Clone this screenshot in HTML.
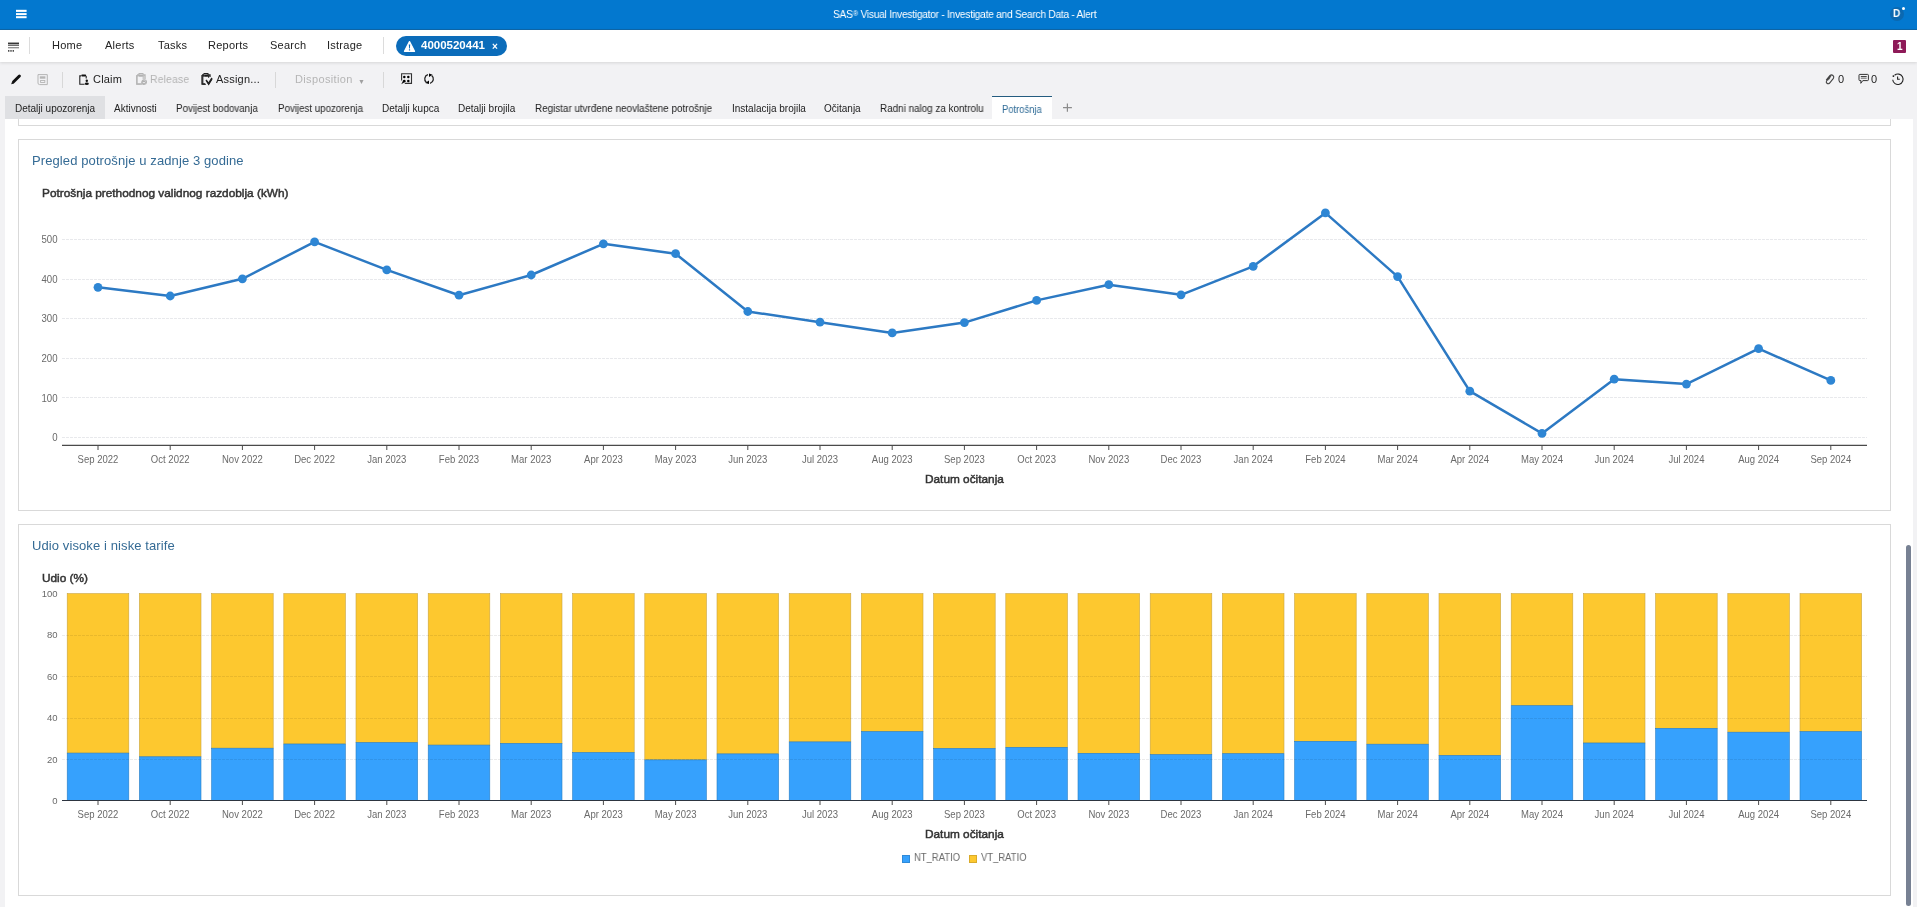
<!DOCTYPE html>
<html><head><meta charset="utf-8">
<style>
*{box-sizing:border-box;margin:0;padding:0}
html,body{width:1917px;height:907px;overflow:hidden;background:#f2f2f4;font-family:"Liberation Sans", sans-serif;color:#1f1f1f}
.abs{position:absolute;white-space:nowrap;will-change:transform}
#top{position:absolute;left:0;top:0;width:1917px;height:30px;background:#0378cf;border-bottom:1px solid #0f66a8}
#nav{position:absolute;left:0;top:30px;width:1917px;height:32px;background:#fff;box-shadow:0 1px 3px rgba(0,0,0,0.12)}
.nv{font-size:11px;color:#222;top:39px;letter-spacing:0.25px}
.tb{font-size:11px;color:#222;top:73px;letter-spacing:0.2px}
.tab{font-size:10px;color:#222;top:103px}
#content{position:absolute;left:5px;top:119px;width:1908px;height:788px;background:#fff}
.panel{position:absolute;border:1px solid #d9d9d9;background:#fff}
.ptitle{font-size:13px;color:#356b95;letter-spacing:0.1px}
svg text{font-family:"Liberation Sans", sans-serif}
.yl{font-size:11px;fill:#6a6a6a}
.yl2{font-size:9.5px;fill:#6a6a6a}
.xl{font-size:10.6px;fill:#6a6a6a}
</style></head><body>
<div id="top"></div>
<div class="abs" style="left:833px;top:8px;font-size:11px;color:#fff;letter-spacing:-0.3px;transform:scaleX(0.932);transform-origin:0 0">SAS<span style="font-size:8px;position:relative;top:-2px">®</span> Visual Investigator - Investigate and Search Data - Alert</div>
<div id="nav"></div>
<div class="abs nv" style="left:52px">Home</div>
<div class="abs nv" style="left:105px">Alerts</div>
<div class="abs nv" style="left:158px">Tasks</div>
<div class="abs nv" style="left:208px">Reports</div>
<div class="abs nv" style="left:270px">Search</div>
<div class="abs nv" style="left:327px">Istrage</div>
<!-- top bar icons -->
<svg class="abs" style="left:16px;top:9px" width="11" height="10" viewBox="0 0 11 10"><rect x="0" y="0.8" width="10.6" height="2.1" fill="#fff"/><rect x="0" y="4.1" width="10.6" height="2" fill="#fff"/><rect x="0" y="7.2" width="10.6" height="2" fill="#fff"/></svg>
<div class="abs" style="left:1890px;top:7px;width:14px;height:14px;border-radius:50%;background:#0b68b0"></div>
<div class="abs" style="left:1893px;top:7px;font-size:10.5px;font-weight:bold;color:#fff;transform:scaleX(0.95);transform-origin:0 0">D</div>
<div class="abs" style="left:1902px;top:7px;width:3.4px;height:3.4px;border-radius:50%;background:#fff"></div>
<!-- nav -->
<svg class="abs" style="left:7px;top:42px" width="13" height="11" viewBox="0 0 13 11"><rect x="1" y="0.6" width="11" height="1.3" fill="#222"/><rect x="1" y="2.6" width="11" height="1.1" fill="#333"/><rect x="1" y="5.2" width="11" height="1.1" fill="#777"/><rect x="1" y="8.2" width="1.4" height="1.4" fill="#222"/><rect x="3.3" y="8.2" width="1.4" height="1.4" fill="#222"/><rect x="5.6" y="8.2" width="1.4" height="1.4" fill="#222"/></svg>
<div class="abs" style="left:29px;top:37px;width:1px;height:17px;background:#dcdcdc"></div>
<div class="abs" style="left:383px;top:37px;width:1px;height:17px;background:#dcdcdc"></div>
<div class="abs" style="left:396px;top:36px;width:111px;height:20px;border-radius:10px;background:#0b6cba"></div>
<svg class="abs" style="left:402px;top:39px" width="15" height="15" viewBox="402 39 15 15"><path d="M409.5 41.6 L414.5 51.3 L404.5 51.3 Z" fill="#fff" stroke="#fff" stroke-width="1.3" stroke-linejoin="round"/><path d="M408.8 44.6 H410.2 L409.9 48.6 H409.1 Z" fill="#0b6cba"/><rect x="408.9" y="49.3" width="1.2" height="1.2" fill="#0b6cba"/></svg>
<div class="abs" style="left:421px;top:39px;font-size:11.5px;font-weight:bold;color:#fff">4000520441</div>
<div class="abs" style="left:492px;top:41px;font-size:10px;font-weight:bold;color:#fff">×</div>
<div class="abs" style="left:1893px;top:40px;width:13px;height:12.5px;border-radius:1px;background:#8e1a58"></div>
<div class="abs" style="left:1896.5px;top:41px;font-size:10px;font-weight:bold;color:#fff">1</div>
<!-- toolbar -->
<svg class="abs" style="left:0;top:66px" width="230" height="26" viewBox="0 66 230 26">
<path d="M13.6 81.8 L19.4 76" stroke="#111" stroke-width="3" stroke-linecap="round"/>
<path d="M11.2 84.3 L12.1 81.5 L14 83.4 Z" fill="#111"/>
<path d="M38 74.6 H47.3 V84.6 H39.6 Q38 84.6 38 83 Z" fill="none" stroke="#b5b5b5" stroke-width="1"/>
<rect x="39.8" y="76.3" width="5.6" height="2.4" fill="#b5b5b5"/>
<rect x="40.6" y="80.5" width="4.2" height="2" fill="none" stroke="#b5b5b5" stroke-width="0.9"/>
<path d="M81 75.9 H79.8 V84.3 H84.6 M86.2 75.9 V78.6" fill="none" stroke="#222" stroke-width="1.1"/>
<rect x="81.2" y="74.5" width="5" height="2.1" rx="1" fill="#111"/>
<circle cx="86.8" cy="80.7" r="1.2" fill="#111"/>
<ellipse cx="86.8" cy="83.7" rx="2" ry="1.2" fill="#111"/>
<path d="M138.3 75.9 H136.6 V84.3 H140.5 M143.2 75.9 V79.2" fill="none" stroke="#bcbcbc" stroke-width="1.1"/>
<rect x="138.5" y="74.5" width="4.5" height="2" rx="0.8" fill="#b0b0b0"/>
<circle cx="143.6" cy="82.6" r="2.3" fill="#b0b0b0"/>
<rect x="142.2" y="82.2" width="2.8" height="0.9" fill="#f2f2f4"/>
<path d="M204.3 75.9 H202.8 V84.3 H206 M208.6 75.9 V77.8" fill="none" stroke="#222" stroke-width="1.1"/>
<rect x="204.4" y="74.4" width="4" height="2.1" rx="1" fill="#111"/>
<path d="M206.8 81.2 L208.7 84.3 L212 79" fill="none" stroke="#111" stroke-width="1.3"/>
</svg>
<div class="abs" style="left:62px;top:72px;width:1px;height:16px;background:#d8d8d8"></div>
<div class="abs tb" style="left:93px">Claim</div>
<svg class="abs" style="left:136px;top:73px" width="11" height="12" viewBox="0 0 11 12"><path d="M1 2 H3 M7 2 H9 V6 M1 2 V11 H6" fill="none" stroke="#b5b5b5" stroke-width="1.3"/><rect x="3" y="0.5" width="4" height="2.5" fill="none" stroke="#b5b5b5" stroke-width="1"/><circle cx="8.3" cy="9" r="2.2" fill="none" stroke="#b5b5b5" stroke-width="1.1"/></svg>
<div class="abs tb" style="left:150px;color:#b3b3b3;transform:scaleX(0.94);transform-origin:0 0">Release</div>
<svg class="abs" style="left:201px;top:73px" width="12" height="12" viewBox="0 0 12 12"><path d="M1 2 H3 M7 2 H9 V4 M1 2 V11 H4" fill="none" stroke="#222" stroke-width="1.3"/><rect x="3" y="0.5" width="4" height="2.5" fill="none" stroke="#222" stroke-width="1"/><path d="M5 7 L7.5 10.5 L11 5" fill="none" stroke="#222" stroke-width="1.4"/></svg>
<div class="abs tb" style="left:216px">Assign...</div>
<div class="abs" style="left:275px;top:72px;width:1px;height:16px;background:#d8d8d8"></div>
<div class="abs tb" style="left:295px;color:#b5b5b5;letter-spacing:0.36px">Disposition</div>
<div class="abs" style="left:358px;top:77.5px;font-size:7px;color:#a0a0a0">▼</div>
<div class="abs" style="left:383px;top:72px;width:1px;height:16px;background:#d8d8d8"></div>
<svg class="abs" style="left:398px;top:71px" width="16" height="16" viewBox="398 71 16 16"><path d="M401.6 80.5 V73.8 H411.5 V83.4 H404.8" fill="none" stroke="#333" stroke-width="1.1"/><path d="M403.2 80.2 L405.8 81.6 L401.3 84.2 Z" fill="#111"/><circle cx="404.3" cy="77" r="1.25" fill="#000"/><circle cx="408.3" cy="77" r="1.25" fill="#000"/><circle cx="404.3" cy="81" r="1.25" fill="#000"/><circle cx="408.3" cy="81" r="1.25" fill="#000"/></svg>
<svg class="abs" style="left:421px;top:71px" width="16" height="16" viewBox="421 71 16 16"><path d="M428 74.7 A4.4 4.4 0 0 0 426.4 82.4" fill="none" stroke="#222" stroke-width="1.3"/><path d="M431.7 75.6 A4.4 4.4 0 0 1 430.1 83.3" fill="none" stroke="#222" stroke-width="1.3"/><path d="M429 73.6 L429 77.1 L432.6 74.7 Z" fill="#000"/><path d="M429 80.5 L429 84 L425.3 82.9 Z" fill="#000"/></svg>
<!-- right toolbar -->
<svg class="abs" style="left:1815px;top:66px" width="100" height="26" viewBox="1815 66 100 26">
<path d="M1831.2 75.4 L1826.6 80.8 A1.9 1.9 0 0 0 1829.4 83.3 L1833.4 78.4 A2.3 2.3 0 0 0 1830 75.4 L1826.2 80" fill="none" stroke="#444" stroke-width="1.1"/>
<path d="M1830.3 77.6 L1828 80.4" stroke="#555" stroke-width="0.9"/>
<path d="M1859 75.2 Q1859 74.4 1859.8 74.4 H1867.6 Q1868.4 74.4 1868.4 75.2 V79.8 Q1868.4 80.6 1867.6 80.6 H1862.8 L1860.8 83.3 L1861 80.6 H1859.8 Q1859 80.6 1859 79.8 Z" fill="none" stroke="#333" stroke-width="1"/>
<rect x="1860.8" y="76" width="5.9" height="0.9" fill="#333"/>
<rect x="1860.8" y="77.7" width="5.9" height="0.9" fill="#555"/>
<path d="M1894.6 75.2 A5.2 5.2 0 1 1 1892.7 79.8" fill="none" stroke="#222" stroke-width="1.1"/>
<circle cx="1893.4" cy="76.1" r="0.9" fill="#111"/>
<path d="M1897.6 76.4 V79.3 H1899.8" fill="none" stroke="#222" stroke-width="1.1"/>
</svg>
<div class="abs tb" style="left:1838px">0</div>
<div class="abs tb" style="left:1871px">0</div>
<!-- tabs -->
<div class="abs" style="left:5px;top:96px;width:100px;height:23px;background:#dfe0e3"></div>
<div class="abs" style="left:992px;top:96px;width:60px;height:23px;background:#fff;border-top:1.5px solid #245c80"></div>
<div class="abs tab" style="left:15px">Detalji upozorenja</div>
<div class="abs tab" style="left:114px">Aktivnosti</div>
<div class="abs tab" style="left:176px;transform:scaleX(0.973);transform-origin:0 0">Povijest bodovanja</div>
<div class="abs tab" style="left:278px;transform:scaleX(0.972);transform-origin:0 0">Povijest upozorenja</div>
<div class="abs tab" style="left:382px">Detalji kupca</div>
<div class="abs tab" style="left:458px">Detalji brojila</div>
<div class="abs tab" style="left:535px;transform:scaleX(0.986);transform-origin:0 0">Registar utvrđene neovlaštene potrošnje</div>
<div class="abs tab" style="left:732px">Instalacija brojila</div>
<div class="abs tab" style="left:824px">Očitanja</div>
<div class="abs tab" style="left:880px;transform:scaleX(0.986);transform-origin:0 0">Radni nalog za kontrolu</div>
<div class="abs tab" style="left:1002px;top:104px;color:#2d6a96;transform:scaleX(0.938);transform-origin:0 0">Potrošnja</div>
<svg class="abs" style="left:1060px;top:100px" width="16" height="16" viewBox="1060 100 16 16"><path d="M1063 107.6 H1071.9 M1067.4 103.6 V111.7" stroke="#8c8c8c" stroke-width="1.2"/></svg>


<div id="content"></div>
<div class="panel" style="left:18px;top:119px;width:1873px;height:7px;border-top:none"></div>
<div class="panel" style="left:18px;top:139px;width:1873px;height:372px"></div>
<div class="panel" style="left:18px;top:524px;width:1873px;height:372px"></div>

<div class="abs ptitle" style="left:32px;top:153px">Pregled potrošnje u zadnje 3 godine</div>
<div class="abs" style="left:42px;top:187px;font-size:11px;color:#333;-webkit-text-stroke:0.45px #333;transform:scaleX(1.075);transform-origin:0 0">Potrošnja prethodnog validnog razdoblja (kWh)</div>
<div class="abs" style="left:925px;top:473px;font-size:11px;color:#333;-webkit-text-stroke:0.45px #333;transform:scaleX(1.075);transform-origin:0 0">Datum očitanja</div>
<div class="abs ptitle" style="left:32px;top:538px">Udio visoke i niske tarife</div>
<div class="abs" style="left:42px;top:572px;font-size:11px;color:#333;-webkit-text-stroke:0.45px #333;transform:scaleX(1.075);transform-origin:0 0">Udio (%)</div>
<div class="abs" style="left:925px;top:828px;font-size:11px;color:#333;-webkit-text-stroke:0.45px #333;transform:scaleX(1.075);transform-origin:0 0">Datum očitanja</div>


<div class="abs" style="left:902px;top:855px;width:8px;height:8px;background:#36a1fd;border:0.5px solid #2f8ad8"></div>
<div class="abs" style="left:914px;top:851px;font-size:10.5px;color:#6a6a6a;transform:scaleX(0.9);transform-origin:0 0">NT_RATIO</div>
<div class="abs" style="left:969px;top:855px;width:8px;height:8px;background:#fdc82f;border:0.5px solid #d9ab2b"></div>
<div class="abs" style="left:981px;top:851px;font-size:10.5px;color:#6a6a6a;transform:scaleX(0.9);transform-origin:0 0">VT_RATIO</div>
<div class="abs" style="left:1906px;top:545px;width:5px;height:361px;border-radius:3px;background:#778193"></div>
<svg class="abs" style="left:0;top:0" width="1917" height="907" viewBox="0 0 1917 907">
<line x1="62" y1="437.5" x2="1867" y2="437.5" stroke="#e8e9ec" stroke-width="1" stroke-dasharray="3,1"/>
<text transform="translate(57.5,441.2) scale(0.875,1)" text-anchor="end" class="yl">0</text>
<line x1="62" y1="397.5" x2="1867" y2="397.5" stroke="#e8e9ec" stroke-width="1" stroke-dasharray="3,1"/>
<text transform="translate(57.5,401.6) scale(0.875,1)" text-anchor="end" class="yl">100</text>
<line x1="62" y1="358.5" x2="1867" y2="358.5" stroke="#e8e9ec" stroke-width="1" stroke-dasharray="3,1"/>
<text transform="translate(57.5,362.0) scale(0.875,1)" text-anchor="end" class="yl">200</text>
<line x1="62" y1="318.5" x2="1867" y2="318.5" stroke="#e8e9ec" stroke-width="1" stroke-dasharray="3,1"/>
<text transform="translate(57.5,322.4) scale(0.875,1)" text-anchor="end" class="yl">300</text>
<line x1="62" y1="279.5" x2="1867" y2="279.5" stroke="#e8e9ec" stroke-width="1" stroke-dasharray="3,1"/>
<text transform="translate(57.5,282.8) scale(0.875,1)" text-anchor="end" class="yl">400</text>
<line x1="62" y1="239.5" x2="1867" y2="239.5" stroke="#e8e9ec" stroke-width="1" stroke-dasharray="3,1"/>
<text transform="translate(57.5,243.2) scale(0.875,1)" text-anchor="end" class="yl">500</text>
<line x1="62" y1="445.3" x2="1867" y2="445.3" stroke="#4a4a4a" stroke-width="1.2"/>
<line x1="98.0" y1="445" x2="98.0" y2="450" stroke="#4a4a4a" stroke-width="1"/>
<text transform="translate(98.0,462.8) scale(0.9,1)" text-anchor="middle" class="xl">Sep 2022</text>
<line x1="170.2" y1="445" x2="170.2" y2="450" stroke="#4a4a4a" stroke-width="1"/>
<text transform="translate(170.2,462.8) scale(0.9,1)" text-anchor="middle" class="xl">Oct 2022</text>
<line x1="242.4" y1="445" x2="242.4" y2="450" stroke="#4a4a4a" stroke-width="1"/>
<text transform="translate(242.4,462.8) scale(0.9,1)" text-anchor="middle" class="xl">Nov 2022</text>
<line x1="314.6" y1="445" x2="314.6" y2="450" stroke="#4a4a4a" stroke-width="1"/>
<text transform="translate(314.6,462.8) scale(0.9,1)" text-anchor="middle" class="xl">Dec 2022</text>
<line x1="386.8" y1="445" x2="386.8" y2="450" stroke="#4a4a4a" stroke-width="1"/>
<text transform="translate(386.8,462.8) scale(0.9,1)" text-anchor="middle" class="xl">Jan 2023</text>
<line x1="459.0" y1="445" x2="459.0" y2="450" stroke="#4a4a4a" stroke-width="1"/>
<text transform="translate(459.0,462.8) scale(0.9,1)" text-anchor="middle" class="xl">Feb 2023</text>
<line x1="531.2" y1="445" x2="531.2" y2="450" stroke="#4a4a4a" stroke-width="1"/>
<text transform="translate(531.2,462.8) scale(0.9,1)" text-anchor="middle" class="xl">Mar 2023</text>
<line x1="603.4" y1="445" x2="603.4" y2="450" stroke="#4a4a4a" stroke-width="1"/>
<text transform="translate(603.4,462.8) scale(0.9,1)" text-anchor="middle" class="xl">Apr 2023</text>
<line x1="675.6" y1="445" x2="675.6" y2="450" stroke="#4a4a4a" stroke-width="1"/>
<text transform="translate(675.6,462.8) scale(0.9,1)" text-anchor="middle" class="xl">May 2023</text>
<line x1="747.8" y1="445" x2="747.8" y2="450" stroke="#4a4a4a" stroke-width="1"/>
<text transform="translate(747.8,462.8) scale(0.9,1)" text-anchor="middle" class="xl">Jun 2023</text>
<line x1="820.0" y1="445" x2="820.0" y2="450" stroke="#4a4a4a" stroke-width="1"/>
<text transform="translate(820.0,462.8) scale(0.9,1)" text-anchor="middle" class="xl">Jul 2023</text>
<line x1="892.2" y1="445" x2="892.2" y2="450" stroke="#4a4a4a" stroke-width="1"/>
<text transform="translate(892.2,462.8) scale(0.9,1)" text-anchor="middle" class="xl">Aug 2023</text>
<line x1="964.4" y1="445" x2="964.4" y2="450" stroke="#4a4a4a" stroke-width="1"/>
<text transform="translate(964.4,462.8) scale(0.9,1)" text-anchor="middle" class="xl">Sep 2023</text>
<line x1="1036.6" y1="445" x2="1036.6" y2="450" stroke="#4a4a4a" stroke-width="1"/>
<text transform="translate(1036.6,462.8) scale(0.9,1)" text-anchor="middle" class="xl">Oct 2023</text>
<line x1="1108.8" y1="445" x2="1108.8" y2="450" stroke="#4a4a4a" stroke-width="1"/>
<text transform="translate(1108.8,462.8) scale(0.9,1)" text-anchor="middle" class="xl">Nov 2023</text>
<line x1="1181.0" y1="445" x2="1181.0" y2="450" stroke="#4a4a4a" stroke-width="1"/>
<text transform="translate(1181.0,462.8) scale(0.9,1)" text-anchor="middle" class="xl">Dec 2023</text>
<line x1="1253.2" y1="445" x2="1253.2" y2="450" stroke="#4a4a4a" stroke-width="1"/>
<text transform="translate(1253.2,462.8) scale(0.9,1)" text-anchor="middle" class="xl">Jan 2024</text>
<line x1="1325.4" y1="445" x2="1325.4" y2="450" stroke="#4a4a4a" stroke-width="1"/>
<text transform="translate(1325.4,462.8) scale(0.9,1)" text-anchor="middle" class="xl">Feb 2024</text>
<line x1="1397.6" y1="445" x2="1397.6" y2="450" stroke="#4a4a4a" stroke-width="1"/>
<text transform="translate(1397.6,462.8) scale(0.9,1)" text-anchor="middle" class="xl">Mar 2024</text>
<line x1="1469.8" y1="445" x2="1469.8" y2="450" stroke="#4a4a4a" stroke-width="1"/>
<text transform="translate(1469.8,462.8) scale(0.9,1)" text-anchor="middle" class="xl">Apr 2024</text>
<line x1="1542.0" y1="445" x2="1542.0" y2="450" stroke="#4a4a4a" stroke-width="1"/>
<text transform="translate(1542.0,462.8) scale(0.9,1)" text-anchor="middle" class="xl">May 2024</text>
<line x1="1614.2" y1="445" x2="1614.2" y2="450" stroke="#4a4a4a" stroke-width="1"/>
<text transform="translate(1614.2,462.8) scale(0.9,1)" text-anchor="middle" class="xl">Jun 2024</text>
<line x1="1686.4" y1="445" x2="1686.4" y2="450" stroke="#4a4a4a" stroke-width="1"/>
<text transform="translate(1686.4,462.8) scale(0.9,1)" text-anchor="middle" class="xl">Jul 2024</text>
<line x1="1758.6" y1="445" x2="1758.6" y2="450" stroke="#4a4a4a" stroke-width="1"/>
<text transform="translate(1758.6,462.8) scale(0.9,1)" text-anchor="middle" class="xl">Aug 2024</text>
<line x1="1830.8" y1="445" x2="1830.8" y2="450" stroke="#4a4a4a" stroke-width="1"/>
<text transform="translate(1830.8,462.8) scale(0.9,1)" text-anchor="middle" class="xl">Sep 2024</text>
<polyline points="98.0,287.3 170.2,296.0 242.4,278.8 314.6,241.8 386.8,269.9 459.0,295.2 531.2,275.0 603.4,243.8 675.6,253.7 747.8,311.5 820.0,322.2 892.2,332.9 964.4,322.6 1036.6,300.4 1108.8,284.7 1181.0,294.8 1253.2,266.3 1325.4,212.9 1397.6,276.6 1469.8,391.2 1542.0,433.4 1614.2,379.2 1686.4,384.1 1758.6,348.7 1830.8,380.4" fill="none" stroke="#2c79c3" stroke-width="2.5" stroke-linejoin="round"/>
<circle cx="98.0" cy="287.3" r="4.4" fill="#2e86d4"/>
<circle cx="170.2" cy="296.0" r="4.4" fill="#2e86d4"/>
<circle cx="242.4" cy="278.8" r="4.4" fill="#2e86d4"/>
<circle cx="314.6" cy="241.8" r="4.4" fill="#2e86d4"/>
<circle cx="386.8" cy="269.9" r="4.4" fill="#2e86d4"/>
<circle cx="459.0" cy="295.2" r="4.4" fill="#2e86d4"/>
<circle cx="531.2" cy="275.0" r="4.4" fill="#2e86d4"/>
<circle cx="603.4" cy="243.8" r="4.4" fill="#2e86d4"/>
<circle cx="675.6" cy="253.7" r="4.4" fill="#2e86d4"/>
<circle cx="747.8" cy="311.5" r="4.4" fill="#2e86d4"/>
<circle cx="820.0" cy="322.2" r="4.4" fill="#2e86d4"/>
<circle cx="892.2" cy="332.9" r="4.4" fill="#2e86d4"/>
<circle cx="964.4" cy="322.6" r="4.4" fill="#2e86d4"/>
<circle cx="1036.6" cy="300.4" r="4.4" fill="#2e86d4"/>
<circle cx="1108.8" cy="284.7" r="4.4" fill="#2e86d4"/>
<circle cx="1181.0" cy="294.8" r="4.4" fill="#2e86d4"/>
<circle cx="1253.2" cy="266.3" r="4.4" fill="#2e86d4"/>
<circle cx="1325.4" cy="212.9" r="4.4" fill="#2e86d4"/>
<circle cx="1397.6" cy="276.6" r="4.4" fill="#2e86d4"/>
<circle cx="1469.8" cy="391.2" r="4.4" fill="#2e86d4"/>
<circle cx="1542.0" cy="433.4" r="4.4" fill="#2e86d4"/>
<circle cx="1614.2" cy="379.2" r="4.4" fill="#2e86d4"/>
<circle cx="1686.4" cy="384.1" r="4.4" fill="#2e86d4"/>
<circle cx="1758.6" cy="348.7" r="4.4" fill="#2e86d4"/>
<circle cx="1830.8" cy="380.4" r="4.4" fill="#2e86d4"/>
<rect x="67.2" y="593.6" width="61.6" height="159.5" fill="#fdc82f" stroke="#c9a440" stroke-width="0.6"/>
<rect x="67.2" y="753.1" width="61.6" height="47.4" fill="#36a1fd" stroke="#2a7fc4" stroke-width="0.6"/>
<rect x="139.4" y="593.6" width="61.6" height="163.2" fill="#fdc82f" stroke="#c9a440" stroke-width="0.6"/>
<rect x="139.4" y="756.8" width="61.6" height="43.7" fill="#36a1fd" stroke="#2a7fc4" stroke-width="0.6"/>
<rect x="211.6" y="593.6" width="61.6" height="154.6" fill="#fdc82f" stroke="#c9a440" stroke-width="0.6"/>
<rect x="211.6" y="748.2" width="61.6" height="52.3" fill="#36a1fd" stroke="#2a7fc4" stroke-width="0.6"/>
<rect x="283.8" y="593.6" width="61.6" height="150.4" fill="#fdc82f" stroke="#c9a440" stroke-width="0.6"/>
<rect x="283.8" y="744.0" width="61.6" height="56.5" fill="#36a1fd" stroke="#2a7fc4" stroke-width="0.6"/>
<rect x="356.0" y="593.6" width="61.6" height="149.0" fill="#fdc82f" stroke="#c9a440" stroke-width="0.6"/>
<rect x="356.0" y="742.6" width="61.6" height="57.9" fill="#36a1fd" stroke="#2a7fc4" stroke-width="0.6"/>
<rect x="428.2" y="593.6" width="61.6" height="151.5" fill="#fdc82f" stroke="#c9a440" stroke-width="0.6"/>
<rect x="428.2" y="745.1" width="61.6" height="55.4" fill="#36a1fd" stroke="#2a7fc4" stroke-width="0.6"/>
<rect x="500.4" y="593.6" width="61.6" height="149.8" fill="#fdc82f" stroke="#c9a440" stroke-width="0.6"/>
<rect x="500.4" y="743.4" width="61.6" height="57.1" fill="#36a1fd" stroke="#2a7fc4" stroke-width="0.6"/>
<rect x="572.6" y="593.6" width="61.6" height="158.9" fill="#fdc82f" stroke="#c9a440" stroke-width="0.6"/>
<rect x="572.6" y="752.5" width="61.6" height="48.0" fill="#36a1fd" stroke="#2a7fc4" stroke-width="0.6"/>
<rect x="644.8" y="593.6" width="61.6" height="166.3" fill="#fdc82f" stroke="#c9a440" stroke-width="0.6"/>
<rect x="644.8" y="759.9" width="61.6" height="40.6" fill="#36a1fd" stroke="#2a7fc4" stroke-width="0.6"/>
<rect x="717.0" y="593.6" width="61.6" height="160.3" fill="#fdc82f" stroke="#c9a440" stroke-width="0.6"/>
<rect x="717.0" y="753.9" width="61.6" height="46.6" fill="#36a1fd" stroke="#2a7fc4" stroke-width="0.6"/>
<rect x="789.2" y="593.6" width="61.6" height="148.3" fill="#fdc82f" stroke="#c9a440" stroke-width="0.6"/>
<rect x="789.2" y="741.9" width="61.6" height="58.6" fill="#36a1fd" stroke="#2a7fc4" stroke-width="0.6"/>
<rect x="861.4" y="593.6" width="61.6" height="138.0" fill="#fdc82f" stroke="#c9a440" stroke-width="0.6"/>
<rect x="861.4" y="731.6" width="61.6" height="68.9" fill="#36a1fd" stroke="#2a7fc4" stroke-width="0.6"/>
<rect x="933.6" y="593.6" width="61.6" height="154.8" fill="#fdc82f" stroke="#c9a440" stroke-width="0.6"/>
<rect x="933.6" y="748.4" width="61.6" height="52.1" fill="#36a1fd" stroke="#2a7fc4" stroke-width="0.6"/>
<rect x="1005.8" y="593.6" width="61.6" height="153.7" fill="#fdc82f" stroke="#c9a440" stroke-width="0.6"/>
<rect x="1005.8" y="747.3" width="61.6" height="53.2" fill="#36a1fd" stroke="#2a7fc4" stroke-width="0.6"/>
<rect x="1078.0" y="593.6" width="61.6" height="159.7" fill="#fdc82f" stroke="#c9a440" stroke-width="0.6"/>
<rect x="1078.0" y="753.3" width="61.6" height="47.2" fill="#36a1fd" stroke="#2a7fc4" stroke-width="0.6"/>
<rect x="1150.2" y="593.6" width="61.6" height="161.0" fill="#fdc82f" stroke="#c9a440" stroke-width="0.6"/>
<rect x="1150.2" y="754.6" width="61.6" height="45.9" fill="#36a1fd" stroke="#2a7fc4" stroke-width="0.6"/>
<rect x="1222.4" y="593.6" width="61.6" height="160.1" fill="#fdc82f" stroke="#c9a440" stroke-width="0.6"/>
<rect x="1222.4" y="753.7" width="61.6" height="46.8" fill="#36a1fd" stroke="#2a7fc4" stroke-width="0.6"/>
<rect x="1294.6" y="593.6" width="61.6" height="147.7" fill="#fdc82f" stroke="#c9a440" stroke-width="0.6"/>
<rect x="1294.6" y="741.3" width="61.6" height="59.2" fill="#36a1fd" stroke="#2a7fc4" stroke-width="0.6"/>
<rect x="1366.8" y="593.6" width="61.6" height="150.6" fill="#fdc82f" stroke="#c9a440" stroke-width="0.6"/>
<rect x="1366.8" y="744.2" width="61.6" height="56.3" fill="#36a1fd" stroke="#2a7fc4" stroke-width="0.6"/>
<rect x="1439.0" y="593.6" width="61.6" height="161.8" fill="#fdc82f" stroke="#c9a440" stroke-width="0.6"/>
<rect x="1439.0" y="755.4" width="61.6" height="45.1" fill="#36a1fd" stroke="#2a7fc4" stroke-width="0.6"/>
<rect x="1511.2" y="593.6" width="61.6" height="112.1" fill="#fdc82f" stroke="#c9a440" stroke-width="0.6"/>
<rect x="1511.2" y="705.7" width="61.6" height="94.8" fill="#36a1fd" stroke="#2a7fc4" stroke-width="0.6"/>
<rect x="1583.4" y="593.6" width="61.6" height="149.4" fill="#fdc82f" stroke="#c9a440" stroke-width="0.6"/>
<rect x="1583.4" y="743.0" width="61.6" height="57.5" fill="#36a1fd" stroke="#2a7fc4" stroke-width="0.6"/>
<rect x="1655.6" y="593.6" width="61.6" height="134.7" fill="#fdc82f" stroke="#c9a440" stroke-width="0.6"/>
<rect x="1655.6" y="728.3" width="61.6" height="72.2" fill="#36a1fd" stroke="#2a7fc4" stroke-width="0.6"/>
<rect x="1727.8" y="593.6" width="61.6" height="138.6" fill="#fdc82f" stroke="#c9a440" stroke-width="0.6"/>
<rect x="1727.8" y="732.2" width="61.6" height="68.3" fill="#36a1fd" stroke="#2a7fc4" stroke-width="0.6"/>
<rect x="1800.0" y="593.6" width="61.6" height="138.0" fill="#fdc82f" stroke="#c9a440" stroke-width="0.6"/>
<rect x="1800.0" y="731.6" width="61.6" height="68.9" fill="#36a1fd" stroke="#2a7fc4" stroke-width="0.6"/>
<text x="57.5" y="803.9" text-anchor="end" class="yl2">0</text>
<line x1="62" y1="759.5" x2="1867" y2="759.5" stroke="#000" stroke-opacity="0.08" stroke-width="1" stroke-dasharray="3,1"/>
<text x="57.5" y="762.5" text-anchor="end" class="yl2">20</text>
<line x1="62" y1="718.5" x2="1867" y2="718.5" stroke="#000" stroke-opacity="0.08" stroke-width="1" stroke-dasharray="3,1"/>
<text x="57.5" y="721.1" text-anchor="end" class="yl2">40</text>
<line x1="62" y1="676.5" x2="1867" y2="676.5" stroke="#000" stroke-opacity="0.08" stroke-width="1" stroke-dasharray="3,1"/>
<text x="57.5" y="679.8" text-anchor="end" class="yl2">60</text>
<line x1="62" y1="635.5" x2="1867" y2="635.5" stroke="#000" stroke-opacity="0.08" stroke-width="1" stroke-dasharray="3,1"/>
<text x="57.5" y="638.4" text-anchor="end" class="yl2">80</text>
<text x="57.5" y="597.0" text-anchor="end" class="yl2">100</text>
<line x1="62" y1="800.5" x2="1867" y2="800.5" stroke="#2d3540" stroke-width="1.2"/>
<line x1="98.0" y1="800.5" x2="98.0" y2="805" stroke="#4a4a4a" stroke-width="1"/>
<text transform="translate(98.0,817.8) scale(0.9,1)" text-anchor="middle" class="xl">Sep 2022</text>
<line x1="170.2" y1="800.5" x2="170.2" y2="805" stroke="#4a4a4a" stroke-width="1"/>
<text transform="translate(170.2,817.8) scale(0.9,1)" text-anchor="middle" class="xl">Oct 2022</text>
<line x1="242.4" y1="800.5" x2="242.4" y2="805" stroke="#4a4a4a" stroke-width="1"/>
<text transform="translate(242.4,817.8) scale(0.9,1)" text-anchor="middle" class="xl">Nov 2022</text>
<line x1="314.6" y1="800.5" x2="314.6" y2="805" stroke="#4a4a4a" stroke-width="1"/>
<text transform="translate(314.6,817.8) scale(0.9,1)" text-anchor="middle" class="xl">Dec 2022</text>
<line x1="386.8" y1="800.5" x2="386.8" y2="805" stroke="#4a4a4a" stroke-width="1"/>
<text transform="translate(386.8,817.8) scale(0.9,1)" text-anchor="middle" class="xl">Jan 2023</text>
<line x1="459.0" y1="800.5" x2="459.0" y2="805" stroke="#4a4a4a" stroke-width="1"/>
<text transform="translate(459.0,817.8) scale(0.9,1)" text-anchor="middle" class="xl">Feb 2023</text>
<line x1="531.2" y1="800.5" x2="531.2" y2="805" stroke="#4a4a4a" stroke-width="1"/>
<text transform="translate(531.2,817.8) scale(0.9,1)" text-anchor="middle" class="xl">Mar 2023</text>
<line x1="603.4" y1="800.5" x2="603.4" y2="805" stroke="#4a4a4a" stroke-width="1"/>
<text transform="translate(603.4,817.8) scale(0.9,1)" text-anchor="middle" class="xl">Apr 2023</text>
<line x1="675.6" y1="800.5" x2="675.6" y2="805" stroke="#4a4a4a" stroke-width="1"/>
<text transform="translate(675.6,817.8) scale(0.9,1)" text-anchor="middle" class="xl">May 2023</text>
<line x1="747.8" y1="800.5" x2="747.8" y2="805" stroke="#4a4a4a" stroke-width="1"/>
<text transform="translate(747.8,817.8) scale(0.9,1)" text-anchor="middle" class="xl">Jun 2023</text>
<line x1="820.0" y1="800.5" x2="820.0" y2="805" stroke="#4a4a4a" stroke-width="1"/>
<text transform="translate(820.0,817.8) scale(0.9,1)" text-anchor="middle" class="xl">Jul 2023</text>
<line x1="892.2" y1="800.5" x2="892.2" y2="805" stroke="#4a4a4a" stroke-width="1"/>
<text transform="translate(892.2,817.8) scale(0.9,1)" text-anchor="middle" class="xl">Aug 2023</text>
<line x1="964.4" y1="800.5" x2="964.4" y2="805" stroke="#4a4a4a" stroke-width="1"/>
<text transform="translate(964.4,817.8) scale(0.9,1)" text-anchor="middle" class="xl">Sep 2023</text>
<line x1="1036.6" y1="800.5" x2="1036.6" y2="805" stroke="#4a4a4a" stroke-width="1"/>
<text transform="translate(1036.6,817.8) scale(0.9,1)" text-anchor="middle" class="xl">Oct 2023</text>
<line x1="1108.8" y1="800.5" x2="1108.8" y2="805" stroke="#4a4a4a" stroke-width="1"/>
<text transform="translate(1108.8,817.8) scale(0.9,1)" text-anchor="middle" class="xl">Nov 2023</text>
<line x1="1181.0" y1="800.5" x2="1181.0" y2="805" stroke="#4a4a4a" stroke-width="1"/>
<text transform="translate(1181.0,817.8) scale(0.9,1)" text-anchor="middle" class="xl">Dec 2023</text>
<line x1="1253.2" y1="800.5" x2="1253.2" y2="805" stroke="#4a4a4a" stroke-width="1"/>
<text transform="translate(1253.2,817.8) scale(0.9,1)" text-anchor="middle" class="xl">Jan 2024</text>
<line x1="1325.4" y1="800.5" x2="1325.4" y2="805" stroke="#4a4a4a" stroke-width="1"/>
<text transform="translate(1325.4,817.8) scale(0.9,1)" text-anchor="middle" class="xl">Feb 2024</text>
<line x1="1397.6" y1="800.5" x2="1397.6" y2="805" stroke="#4a4a4a" stroke-width="1"/>
<text transform="translate(1397.6,817.8) scale(0.9,1)" text-anchor="middle" class="xl">Mar 2024</text>
<line x1="1469.8" y1="800.5" x2="1469.8" y2="805" stroke="#4a4a4a" stroke-width="1"/>
<text transform="translate(1469.8,817.8) scale(0.9,1)" text-anchor="middle" class="xl">Apr 2024</text>
<line x1="1542.0" y1="800.5" x2="1542.0" y2="805" stroke="#4a4a4a" stroke-width="1"/>
<text transform="translate(1542.0,817.8) scale(0.9,1)" text-anchor="middle" class="xl">May 2024</text>
<line x1="1614.2" y1="800.5" x2="1614.2" y2="805" stroke="#4a4a4a" stroke-width="1"/>
<text transform="translate(1614.2,817.8) scale(0.9,1)" text-anchor="middle" class="xl">Jun 2024</text>
<line x1="1686.4" y1="800.5" x2="1686.4" y2="805" stroke="#4a4a4a" stroke-width="1"/>
<text transform="translate(1686.4,817.8) scale(0.9,1)" text-anchor="middle" class="xl">Jul 2024</text>
<line x1="1758.6" y1="800.5" x2="1758.6" y2="805" stroke="#4a4a4a" stroke-width="1"/>
<text transform="translate(1758.6,817.8) scale(0.9,1)" text-anchor="middle" class="xl">Aug 2024</text>
<line x1="1830.8" y1="800.5" x2="1830.8" y2="805" stroke="#4a4a4a" stroke-width="1"/>
<text transform="translate(1830.8,817.8) scale(0.9,1)" text-anchor="middle" class="xl">Sep 2024</text>
</svg>
</body></html>
